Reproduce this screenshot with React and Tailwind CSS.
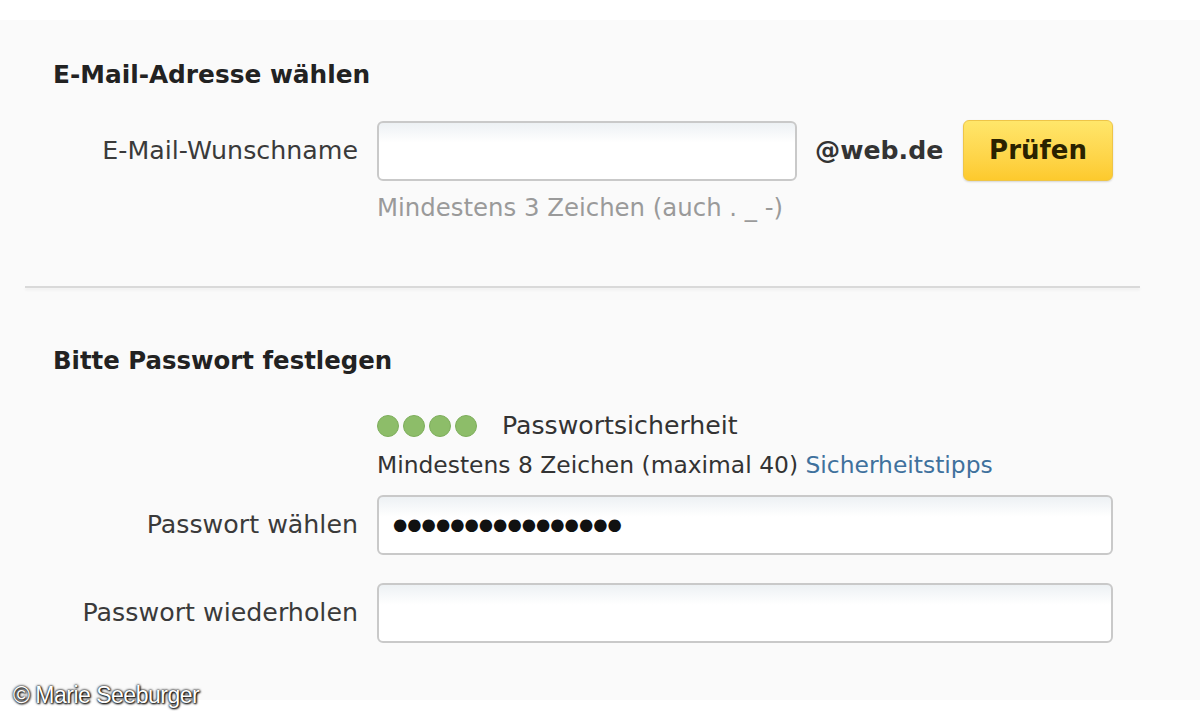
import { useState } from 'react';

const font = { fontFamily: '"DejaVu Sans", Verdana, sans-serif' };

function Field({ className = '', children }) {
  return (
    <div
      className={`h-[60px] rounded-[6px] border-2 border-[#c9c9c9] bg-linear-to-b from-[#edf1f4] to-white to-[35%] flex items-center px-[14px] ${className}`}
    >
      {children}
    </div>
  );
}

function Label({ children }) {
  return <div className="w-[358px] text-right text-[25.3px] text-[#3a3a3a] leading-[30px]">{children}</div>;
}

export default function App() {
  const [wunschname, setWunschname] = useState('');
  const [repeat, setRepeat] = useState('');

  return (
    <div className="relative w-[1200px] h-[720px] bg-white overflow-hidden" style={font}>
      <div className="mt-[20px] h-[680px] bg-[#fafafa]">
        <h2 className="pt-[40px] pl-[53px] text-[24.8px] font-bold leading-[30px] text-[#222]">E-Mail-Adresse wählen</h2>

        <div className="mt-[30px] flex items-center">
          <Label>E-Mail-Wunschname</Label>
          <Field className="ml-[19px] w-[420px]">
            <input
              value={wunschname}
              onChange={(e) => setWunschname(e.target.value)}
              className="w-full bg-transparent outline-none text-[24px]"
            />
          </Field>
          <span className="ml-[18px] w-[128px] text-[25.2px] font-bold text-[#333] whitespace-nowrap">@web.de</span>
          <button className="ml-[20px] w-[150px] h-[61px] rounded-[6px] border border-[#eec548] bg-linear-to-b from-[#ffe66a] to-[#fdca2c] text-[26px] font-bold text-[#2a2200] shadow-[0_1px_2px_rgba(0,0,0,0.15)]">
            Prüfen
          </button>
        </div>
        <p className="mt-[13px] ml-[377px] text-[24.4px] leading-[28px] text-[#9a9a9a]">Mindestens 3 Zeichen (auch . _ -)</p>

        <div className="mt-[64px] ml-[25px] w-[1115px] h-[2px] bg-[#d9d9d9] shadow-[0_2px_3px_rgba(0,0,0,0.06)]"></div>

        <h2 className="mt-[58px] pl-[53px] text-[24.4px] font-bold leading-[30px] text-[#222]">Bitte Passwort festlegen</h2>

        <div className="mt-[35px] ml-[377px] flex items-center h-[30px]">
          <div className="flex gap-[4px]">
            {[0, 1, 2, 3].map((i) => (
              <span key={i} className="w-[22px] h-[22px] rounded-full bg-[#8dbd69] border border-[#7eae5c]"></span>
            ))}
          </div>
          <span className="ml-[25px] text-[25.2px] text-[#333]">Passwortsicherheit</span>
        </div>
        <p className="mt-[10px] ml-[377px] text-[23.4px] leading-[28px] text-[#333]">
          Mindestens 8 Zeichen (maximal 40) <a className="text-[#3f719d]">Sicherheitstipps</a>
        </p>

        <div className="mt-[16px] flex items-center">
          <Label>Passwort wählen</Label>
          <Field className="ml-[19px] w-[736px]">
            <span className="text-[16.4px] text-[#111] leading-none">●●●●●●●●●●●●●●●●</span>
          </Field>
        </div>

        <div className="mt-[28px] flex items-center">
          <Label>Passwort wiederholen</Label>
          <Field className="ml-[19px] w-[736px]">
            <input
              type="password"
              value={repeat}
              onChange={(e) => setRepeat(e.target.value)}
              className="w-full bg-transparent outline-none text-[24px]"
            />
          </Field>
        </div>
      </div>

      <div
        className="absolute left-[13px] top-[684px] text-[23px] tracking-[-0.5px] text-white leading-none"
        style={{ fontFamily: '"Liberation Sans", Arial, sans-serif', textShadow: '0 0 2px #000, 1px 1px 2px #000, 0 0 3px rgba(0,0,0,0.8)' }}
      >
        © Marie Seeburger
      </div>
    </div>
  );
}
